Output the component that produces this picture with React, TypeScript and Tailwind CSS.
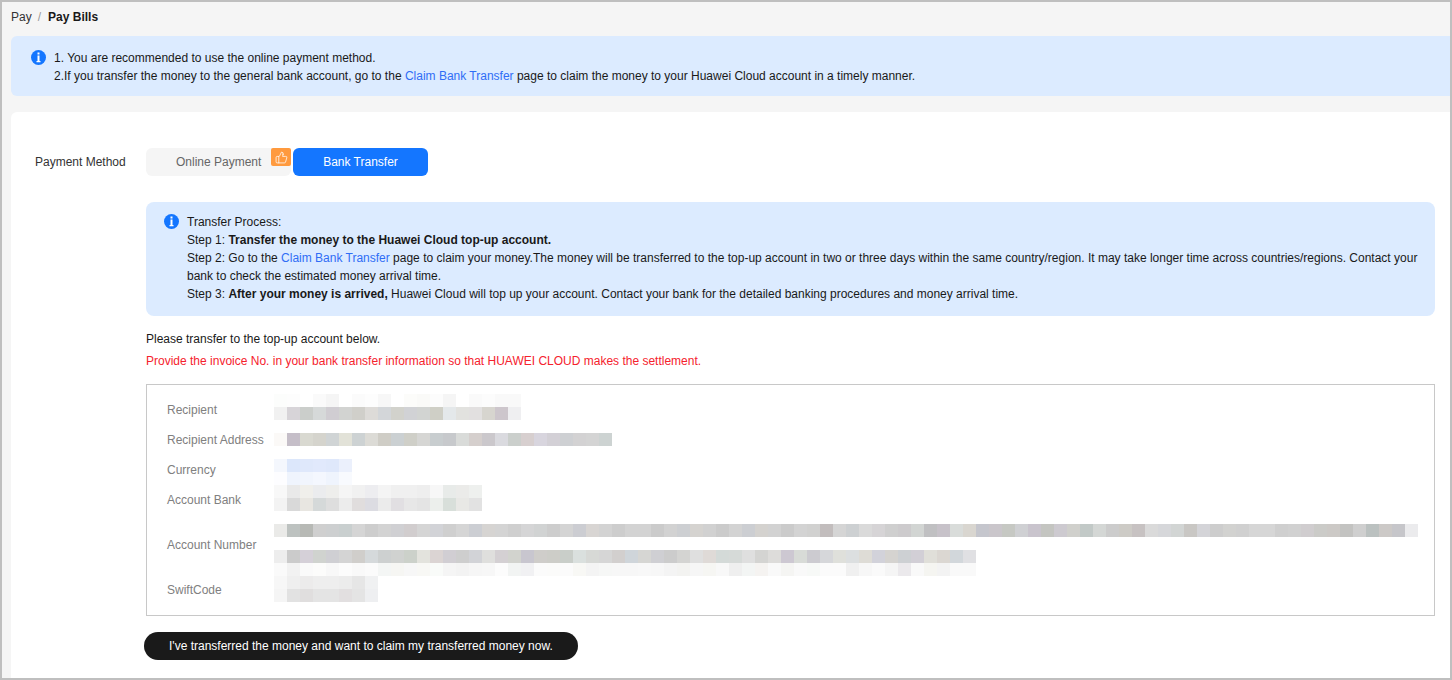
import { ThumbsUp } from "lucide-react";

const rows: Record<string, string> = {
  r1: "fcfdfc fdfdfd ffffff fafafa f5f5f5 ffffff fbfbfb fdfdfd f7f7f7 ffffff fcfcfa fafaf8 fcfcfc f5f5f5 ffffff fafafa fcfcfc f9f9f9 f9f9f9",
  r2: "f1f1f1 d7d4d8 cbcecb d6d9d9 d0cdd2 d2d3d1 d0cfca dddbd8 d3d6d9 d2d2cc d1d2d5 d2d4d2 cfcfc6 e4e8ea e2e2df e2e0e0 d7d5cf cdc6cc efeff1",
  addr: "fbf9f7 c5bec8 d9d9d1 d5d4cd d0d4d5 e2e2d8 cdd2d3 dcdbd6 cfcdc6 cbd0d2 cfcfc8 d6d6d4 c8cdcf c7c9cc d9dbd9 d5cfcd cbc8cc dadadf cbcfcc d7cfcf d8d5de d3d0d6 ced0d3 d3d2d3 d4d4d4 cdd3d2",
  cur1: "f4f7fd dce7fb dfe8fb e1e9fc dfe8fb ebf0fc",
  cur2: "fdfdff eff4fd f1f5fd f4f7fe eff4fd f8fafe",
  bank1: "f8f8f8 e9e9e9 f0efeb ebecee eeeeec f5f5f5 f1f1f1 ededf0 f4f4f4 f0f0f0 f0f0f0 eeeeee f7f7f7 e8ebe9 ebebe9 eef0ee",
  bank2: "f3f3f3 d9d9d9 e8e6e1 d5d9d9 dedede ececec e0dddd dcdce2 ebebeb e1dfe2 e7e7e7 e4e4e4 ecefec d8dfda e8e8e5 e2e2e2",
  acc1: "eaeae8 bdc2c0 b7b9b5 cfcfcf cdcfd0 c9cfcf d5d5d5 cdcdcd d3d3d3 d0d0d3 d1cdce d5d5d5 d2d3d7 cfcfcf d5d5d5 ccced3 d6d4d2 d4d4d4 cfcfcf d5d5d6 d1d3d3 cdcdcd d4d4d4 cccdd2 d8d5d3 d3d3d3 cdcdcd d3d3d3 d3d3d3 cbcbcb d2d2d2 cdcfd2 d5d3d0 d1d1d1 cbcbcb d3d3d3 ccced2 d4d2cf d2d2d2 cbcbcb d3d3d3 d1d1d0 c2bdbd d5d5d5 cdd0d2 dadada d6d4d6 cfcfcf cdcbcd d2d5d3 c0c0c2 c7c2c9 d9dcda d9d6d0 c5c6cd cac6cb c6c8c3 cfd0d3 c9c4cd c4c5c1 cdcad0 d0d0cc c2c9c7 d4d7d5 cccccc cdcbc6 c7c2c2 dadada d6d7da d2d5d4 c9c7c4 d4d4d8 cdcdcd d2d2d0 d0d0d0 d6d6d6 d6d6d6 cfcfcf d1d1d1 d0cdcf cbcbc8 ccc9c6 c3c3c1 cfcfcf bbc1c0 ccc9c7 c6c6ca ebebed",
  acc2: "ededed cbcbcb d5d0d8 d0d3cf cfcfd3 d4d4d4 d0cecb d5d9db cdd0d0 d0d2d0 ccd1ca e3e3dd dbd4d3 d1ced3 cecece d2d3d7 dfdfdd d4d0d3 d2d3ce c8c6cf cfcdca cdcdc8 c9cec9 dae0de d7d9d6 d6d6d6 d2cfce cfd5da d6d6d3 cfcfd3 cccccc d4d4d2 dfdfdf dfdad7 d4dad8 d6dad8 dfdfdf d4d4d2 dddcda cdc8d2 d8dbd7 cccbd0 d6d7da dfe0db dcdfe0 dedcd6 d2d2da d5d3d0 cdd0d3 d2cfd6 e0dfd9 dbd7d2 d2d7db e0e0e3",
  acc3: "fafafa f2f2f2 fafafa fcfcfb f8f8f8 fcfcfc f9f9f9 fbfbfb f4f6f5 f6f6f3 f7f7f7 f8f8f5 f9fbf9 f5f5f5 f3f3f3 f6f6f6 f7f7f7 fcfcfc f2f4f3 f1f1f3 fbfbfb fbfbfa fbfbfb f8f8f5 f4f4f4 f6f7f6 f7f7f7 f7f7f7 f8f8f8 f7f7f7 f4f4f4 f3f3f1 f6f6f6 f6f6f3 f8f8f8 efefef f3f5f4 f5f3f1 f9f9f9 f5f5f3 f9f9f9 f7f9f7 fbfbfb fbfbfb f0f0f0 f7f7f7 fafafa f5f5f5 ebe9ec f9f9f9 f5f5f1 f3f3f3 f9f9f9 f9f9f9",
  sw1: "f7f7f7 efefef ecebeb eeeeee eeeeee ececec e6e6e6 f0f1f2",
  sw2: "f5f5f5 e2e2e2 e0dede e4e4e4 e4e4e4 e2dfe0 e4e4e4 eeeff1",
};

function Pixels({ name }: { name: string }) {
  return (
    <div className="flex h-[13px]">
      {rows[name].split(" ").map((c, i) => (
        <div key={i} className="h-[13px] w-[13px] shrink-0" style={{ backgroundColor: `#${c}` }} />
      ))}
    </div>
  );
}

function InfoIcon({ className }: { className: string }) {
  return (
    <svg viewBox="0 0 15 15" className={className}>
      <circle cx="7.5" cy="7.5" r="7.5" fill="#1476ff" />
      <rect x="6.5" y="2.5" width="2" height="2" fill="#fff" />
      <path d="M6.5 5.5h2v5.5h1v1.2h-4V11h1z" fill="#fff" />
    </svg>
  );
}

function Row({ label, h, pt, names }: { label: string; h: string; pt: string; names: string[] }) {
  return (
    <div className={`flex ${h}`}>
      <div className="flex w-[107px] shrink-0 items-center text-[#808080]">{label}</div>
      <div className={pt}>
        {names.map((n) => (n === "gap" ? <div key={n} className="h-[13px]" /> : <Pixels key={n} name={n} />))}
      </div>
    </div>
  );
}

const Link = ({ children }: { children: string }) => <span className="text-[#2f6df6]">{children}</span>;

export default function App() {
  return (
    <div className="flex h-[680px] w-[1452px] flex-col overflow-hidden border-2 border-[#bfbfbf] bg-[#f5f5f5] font-['Liberation_Sans',Arial,sans-serif] text-[12px] leading-[18px] text-[#191919]">
      <div className="flex h-[34px] shrink-0 items-center pb-[4px] pl-[9px]">
        <span className="text-[#333]">Pay</span>
        <span className="ml-[6px] mr-[7px] text-[#999]">/</span>
        <span className="font-bold">Pay Bills</span>
      </div>
      <div className="ml-[9px] flex h-[60px] shrink-0 rounded-l-[6px] bg-[#dcebff] pl-[20px] pt-[13px]">
        <InfoIcon className="mt-[1px] h-[15px] w-[15px] shrink-0" />
        <div className="ml-[8px]">
          <div>1. You are recommended to use the online payment method.</div>
          <div>
            2.If you transfer the money to the general bank account, go to the <Link>Claim Bank Transfer</Link> page to claim the money to your Huawei Cloud account in a timely manner.
          </div>
        </div>
      </div>
      <div className="ml-[9px] mt-[16px] flex-1 rounded-tl-[6px] bg-white pl-[24px] pr-[15px] pt-[36px]">
        <div className="flex items-center">
          <div className="w-[111px] shrink-0 text-[#333]">Payment Method</div>
          <div className="flex gap-[2px]">
            <div className="relative flex h-[28px] w-[145px] items-center rounded-[6px] bg-[#f5f5f5] pl-[30px] text-[#666]">
              Online Payment
              <div className="absolute right-0 top-0 flex h-[18px] w-[20px] items-center justify-center rounded-[2px] bg-[#ff9a3e]">
                <ThumbsUp className="h-[13px] w-[13px] text-white" strokeWidth={1.4} />
              </div>
            </div>
            <div className="flex h-[28px] w-[135px] items-center justify-center rounded-[6px] bg-[#1476ff] text-white">Bank Transfer</div>
          </div>
        </div>
        <div className="ml-[111px]">
          <div className="mt-[26px] flex h-[114px] rounded-[8px] bg-[#dcebff] pl-[18px] pr-[15px] pt-[11px]">
            <InfoIcon className="mt-[1px] h-[15px] w-[15px] shrink-0" />
            <div className="ml-[8px]">
              <div>Transfer Process:</div>
              <div>
                Step 1: <b>Transfer the money to the Huawei Cloud top-up account.</b>
              </div>
              <div>
                Step 2: Go to the <Link>Claim Bank Transfer</Link> page to claim your money.The money will be transferred to the top-up account in two or three days within the same country/region. It may take longer time across countries/regions. Contact your bank to check the estimated money arrival time.
              </div>
              <div>
                Step 3: <b>After your money is arrived,</b> Huawei Cloud will top up your account. Contact your bank for the detailed banking procedures and money arrival time.
              </div>
            </div>
          </div>
          <div className="mt-[14px]">Please transfer to the top-up account below.</div>
          <div className="mt-[4px] text-[#f5222d]">Provide the invoice No. in your bank transfer information so that HUAWEI CLOUD makes the settlement.</div>
          <div className="mt-[14px] h-[232px] border border-[#c8c8c8] pl-[20px] pt-[9px]">
            <Row label="Recipient" h="h-[32px]" pt="pt-0" names={["r1", "r2"]} />
            <Row label="Recipient Address" h="h-[28px]" pt="pt-[7px]" names={["addr"]} />
            <Row label="Currency" h="h-[32px]" pt="pt-[5px]" names={["cur1", "cur2"]} />
            <Row label="Account Bank" h="h-[28px]" pt="-mt-px" names={["bank1", "bank2"]} />
            <Row label="Account Number" h="h-[62px]" pt="pt-[10px]" names={["acc1", "gap", "acc2", "acc3"]} />
            <Row label="SwiftCode" h="h-[28px]" pt="pt-0" names={["sw1", "sw2"]} />
          </div>
          <div className="-ml-[2px] mt-[16px] flex h-[28px] w-[434px] items-center rounded-full bg-[#1a1a1a] pl-[25px] text-white">
            I've transferred the money and want to claim my transferred money now.
          </div>
        </div>
      </div>
    </div>
  );
}
